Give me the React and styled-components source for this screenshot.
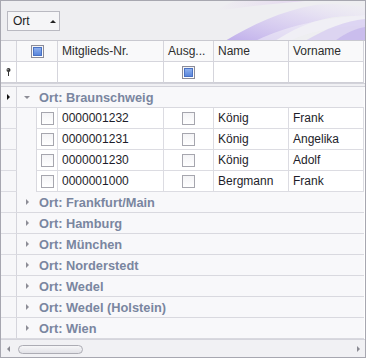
import React from 'react'
import styled, { createGlobalStyle } from 'styled-components'

const GlobalStyle = createGlobalStyle`
  html, body { margin: 0; padding: 0; background: #fff; }
  body { font-family: "Liberation Sans", Arial, sans-serif; }
`

const COLS = '16px 41px 106px 50px 75px 75px 1px'

const Frame = styled.div`
  width: 366px;
  height: 358px;
  box-sizing: border-box;
  border: 1px solid #a7a7b0;
  display: flex;
  flex-direction: column;
  overflow: hidden;
  background: #fff;
  font-size: 12px;
  color: #1f1f1f;
`

const GroupPanel = styled.div`
  position: relative;
  height: 40px;
  flex: none;
  box-sizing: border-box;
  padding: 10px 0 0 6px;
  background: #eeeef1;
  border-bottom: 1px solid #c9c9d0;
  overflow: hidden;
`

const Swirl = styled.svg`
  position: absolute;
  right: 0;
  top: 0;
`

const GroupChip = styled.div`
  position: relative;
  width: 53px;
  height: 20px;
  box-sizing: border-box;
  border: 1px solid #b9b9c1;
  background: #f5f5f7;
  display: flex;
  align-items: center;
  padding-left: 5px;
  gap: 20px;
  color: #222;
`

const Row = styled.div`
  display: grid;
  grid-template-columns: ${COLS};
  height: 21px;
  flex: none;
`

const HeadCell = styled.div`
  box-sizing: border-box;
  border-right: 1px solid #d5d5dc;
  border-bottom: 1px solid #d5d5dc;
  background: ${p => (p.$dim ? '#f6f6f8' : '#f9f9fa')};
  display: flex;
  align-items: center;
  justify-content: ${p => (p.$center ? 'center' : 'flex-start')};
  padding-left: ${p => (p.$center ? 0 : 4)}px;
  white-space: nowrap;
  overflow: hidden;
  color: #2d2d2d;
`

const FilterCell = styled(HeadCell)`
  background: #fff;
  border-bottom-color: #cfcfd6;
`

const Indicator = styled.div`
  box-sizing: border-box;
  height: 21px;
  border-right: 1px solid #d5d5dc;
  border-bottom: 1px solid #dcdce2;
  background: #f7f7f9;
  display: flex;
  align-items: center;
  justify-content: center;
`

const Separator = styled.div`
  flex: none;
  background: #f0f0f3;
  border-top: 1px solid #d3d3da;
  border-bottom: 1px solid #d3d3da;
  box-sizing: border-box;
  height: 4px;
`

const GroupRow = styled(Row)`
  grid-template-columns: 16px 1fr 1px;
`

const GroupCell = styled.div`
  box-sizing: border-box;
  border-bottom: 1px solid #d9d9df;
  background: #f8f8fa;
  display: flex;
  align-items: center;
  padding-left: ${p => (p.$open ? 7 : 9)}px;
  gap: ${p => (p.$open ? 9 : 10)}px;
  font-weight: bold;
  font-size: 12.8px;
  color: #7a86a0;
`

const DataBlock = styled.div`
  display: grid;
  grid-template-columns: 16px 20px 1fr;
  flex: none;
`

const IndentStrip = styled.div`
  background: #f8f8fa;
  border-right: 1px solid #d9d9df;
`

const DataRows = styled.div`
  display: flex;
  flex-direction: column;
`

const DataRow = styled.div`
  display: grid;
  grid-template-columns: 21px 106px 50px 75px 75px 1px;
  height: 21px;
`

const Cell = styled.div`
  box-sizing: border-box;
  border-right: 1px solid #dcdce2;
  border-bottom: 1px solid #dcdce2;
  display: flex;
  align-items: center;
  justify-content: ${p => (p.$center ? 'center' : 'flex-start')};
  padding-left: ${p => (p.$pad ?? 4)}px;
  white-space: nowrap;
  color: #1d1d2a;
`

const Filler = styled.div`
  background: #fff;
`

const IndicatorCol = styled.div`
  display: flex;
  flex-direction: column;
`

const Box = styled.span`
  width: 13px;
  height: 13px;
  box-sizing: border-box;
  border: 1px solid ${p => (p.$mixed ? '#8c8c98' : '#a6a6ae')};
  background: linear-gradient(#f4f4f6, #ffffff);
  display: flex;
  align-items: center;
  justify-content: center;
  &::after {
    content: '';
    display: ${p => (p.$mixed ? 'block' : 'none')};
    width: 9px;
    height: 9px;
    box-sizing: border-box;
    border: 1px solid #4a72c4;
    background: linear-gradient(#8eb0ee, #5a86dc);
  }
`

const Scrollbar = styled.div`
  height: 19px;
  flex: none;
  margin-top: auto;
  background: #f1f1f4;
  border-top: 1px solid #d5d5dc;
  box-sizing: border-box;
  display: flex;
  align-items: center;
  padding: 0 5px 0 6px;
`

const Thumb = styled.div`
  width: 65px;
  height: 9px;
  margin-left: 8px;
  box-sizing: border-box;
  border: 1px solid #acacb4;
  border-radius: 5px;
  background: linear-gradient(#f6f6f8, #e2e2e7);
`

const Spacer = styled.div`
  flex: 1;
`

const Tri = ({ dir, color = '#7f7f88', size = 3 }) => {
  const s = size
  const pts = {
    right: `0,0 ${s},${s} 0,${2 * s}`,
    left: `${s},0 0,${s} ${s},${2 * s}`,
    up: `0,${s} ${s},0 ${2 * s},${s}`,
    down: `0,0 ${2 * s},0 ${s},${s}`,
  }[dir]
  const horiz = dir === 'left' || dir === 'right'
  return (
    <svg width={horiz ? s : 2 * s} height={horiz ? 2 * s : s} style={{ display: 'block' }}>
      <polygon points={pts} fill={color} />
    </svg>
  )
}

const Pin = () => (
  <svg width="5" height="8" viewBox="0 0 5 8" style={{ display: 'block' }}>
    <circle cx="2.5" cy="2" r="2" fill="#333" />
    <circle cx="2" cy="1.6" r="0.8" fill="#999" />
    <rect x="2" y="3.5" width="1" height="4.5" fill="#333" />
  </svg>
)

const members = [
  ['0000001232', 'König', 'Frank'],
  ['0000001231', 'König', 'Angelika'],
  ['0000001230', 'König', 'Adolf'],
  ['0000001000', 'Bergmann', 'Frank'],
]

const cities = ['Frankfurt/Main', 'Hamburg', 'München', 'Norderstedt', 'Wedel', 'Wedel (Holstein)', 'Wien']

export default function App() {
  return (
    <>
      <GlobalStyle />
      <Frame>
        <GroupPanel>
          <Swirl width="170" height="40" viewBox="0 0 170 40">
            <defs>
              <linearGradient id="sw1" x1="0" y1="1" x2="1" y2="0">
                <stop offset="0" stopColor="#b9a6ea" stopOpacity="0.9" />
                <stop offset="0.6" stopColor="#d9cdf3" stopOpacity="0.6" />
                <stop offset="1" stopColor="#f1edf8" stopOpacity="0.2" />
              </linearGradient>
              <linearGradient id="sw2" x1="0" y1="0" x2="1" y2="0">
                <stop offset="0" stopColor="#e8dcef" stopOpacity="0" />
                <stop offset="1" stopColor="#e2d3ef" stopOpacity="0.9" />
              </linearGradient>
            </defs>
            <path d="M20 10 C60 4 90 2 110 0 L40 0 C30 4 24 7 20 10 Z" fill="url(#sw2)" />
            <path d="M30 40 C55 25 85 10 120 4 C135 2 150 3 170 6 L170 16 C140 12 110 20 80 40 Z" fill="url(#sw1)" />
            <path d="M60 40 C90 26 120 18 170 14 L170 24 C135 26 110 32 95 40 Z" fill="#f3f1f8" opacity="0.55" />
            <path d="M110 40 C130 28 150 20 170 18 L170 40 Z" fill="#cdbff0" opacity="0.55" />
            <path d="M140 40 C150 32 160 28 170 26 L170 40 Z" fill="#b8a6ea" opacity="0.5" />
          </Swirl>
          <GroupChip>
            <span>Ort</span>
            <Tri dir="up" color="#222" size={3} />
          </GroupChip>
        </GroupPanel>

        <Row>
          <HeadCell $dim />
          <HeadCell $center><Box $mixed /></HeadCell>
          <HeadCell>Mitglieds-Nr.</HeadCell>
          <HeadCell>Ausg...</HeadCell>
          <HeadCell>Name</HeadCell>
          <HeadCell>Vorname</HeadCell>
          <Filler />
        </Row>

        <Row>
          <FilterCell $center $dim><Pin /></FilterCell>
          <FilterCell />
          <FilterCell />
          <FilterCell $center><Box $mixed /></FilterCell>
          <FilterCell />
          <FilterCell />
          <Filler />
        </Row>

        <Separator />

        <GroupRow>
          <Indicator><Tri dir="right" color="#111" size={3} /></Indicator>
          <GroupCell $open>
            <Tri dir="down" color="#8d8d96" size={3} />
            <span>Ort: Braunschweig</span>
          </GroupCell>
          <Filler />
        </GroupRow>

        <DataBlock>
          <IndicatorCol>
            {members.map(m => <Indicator key={m[0]} />)}
          </IndicatorCol>
          <IndentStrip />
          <DataRows>
            {members.map(([nr, name, vorname]) => (
              <DataRow key={nr}>
                <Cell><Box /></Cell>
                <Cell>{nr}</Cell>
                <Cell $center $pad={0}><Box /></Cell>
                <Cell>{name}</Cell>
                <Cell>{vorname}</Cell>
                <Filler />
              </DataRow>
            ))}
          </DataRows>
        </DataBlock>

        {cities.map(c => (
          <GroupRow key={c}>
            <Indicator />
            <GroupCell>
              <Tri dir="right" color="#8d8d96" size={3} />
              <span>Ort: {c}</span>
            </GroupCell>
            <Filler />
          </GroupRow>
        ))}

        <Scrollbar>
          <Tri dir="left" color="#8a8a92" size={3} />
          <Thumb />
          <Spacer />
          <Tri dir="right" color="#8a8a92" size={3} />
        </Scrollbar>
      </Frame>
    </>
  )
}
